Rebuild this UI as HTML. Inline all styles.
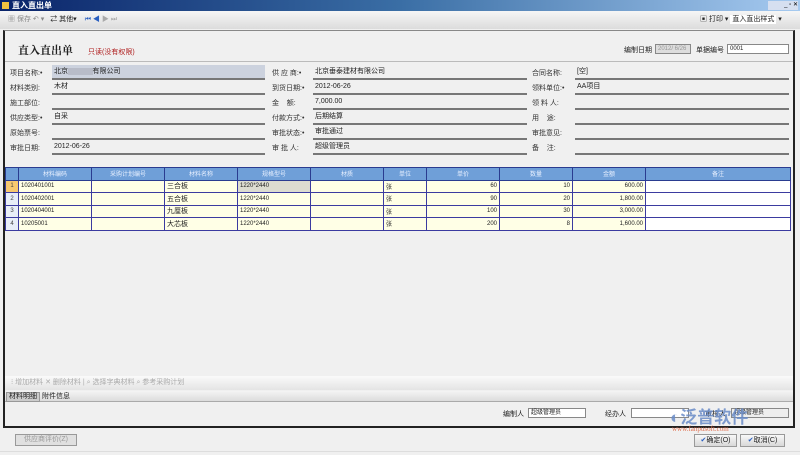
<!DOCTYPE html>
<html><head><meta charset="utf-8"><style>
*{margin:0;padding:0;box-sizing:border-box}
body{width:800px;height:455px;background:#f0f0f0;font-family:"Liberation Sans","Noto Sans CJK SC",sans-serif;font-size:7px;color:#222;position:relative;overflow:hidden}
.a{position:absolute}
.title{left:0;top:0;width:800px;height:11px;background:linear-gradient(90deg,#0a246a,#3a6ea5 50%,#a6caf0);color:#fff;font-weight:bold;font-size:8px;line-height:11px;padding-left:12px}
.tb{left:0;top:11px;width:800px;height:18px;background:linear-gradient(#f6f6f6,#dcdcdc);color:#888;line-height:18px}
.panel{left:3px;top:30px;width:792px;height:398px;border:2px solid #222;border-top:1px solid #888;background:#f0f0f0}
.lbl{color:#333;line-height:15px}
.val{border-bottom:2px solid #777;height:15px;line-height:14px;padding-left:2px}
table{border-collapse:collapse;position:absolute;left:5px;top:167px;font-size:6px}
td,th{border:1px solid #3b3ba0;height:12.5px;padding:0 2px;white-space:nowrap}
th{background:#6f9fd8;color:#e8f0ff;font-weight:normal;border-color:#2a3c90}
td{background:#ffffe6}
td.r{text-align:right}
td.w{background:#fff}
td.n{background:#e8eef8;text-align:center;color:#444}
.btn{border:1px solid #999;background:linear-gradient(#f8f8f8,#d8d8d8);text-align:center}
.inp{background:#fff;border:1px solid #888;height:10px;line-height:9px;padding-left:2px;font-size:6px}
</style></head><body>
<div class="a title">直入直出单</div>
<div class="a" style="left:2px;top:2px;width:7px;height:7px;background:#f0c040"></div>
<div class="a" style="left:768px;top:1px;width:30px;height:9px;background:#d6dff0;font-size:6px;color:#000;text-align:right">_ ▫ ✕</div>
<div class="a tb"><span style="margin-left:8px">▦ 保存 ↶ ▾</span><span style="color:#222;margin-left:6px">⇄ 其他▾</span><span style="color:#2a5fc0;margin-left:8px">⏮ ◀ </span><span style="color:#aaa">▶ ⏭</span></div>
<div class="a" style="left:700px;top:13px;width:98px;height:14px;line-height:14px;color:#222">▣ 打印 ▾ <span style="background:#fff;padding:1px 2px">直入直出样式</span> ▾</div>
<div class="a panel"></div>
<div class="a" style="left:18px;top:42px;font-size:11px;font-weight:bold;font-family:'Noto Serif CJK SC',serif">直入直出单</div>
<div class="a" style="left:88px;top:47px;color:#b02020">只读(没有权限)</div>
<div class="a" style="left:624px;top:45px">编制日期</div>
<div class="a inp" style="left:655px;top:44px;width:36px;background:#ddd;color:#999">2012/ 6/26</div>
<div class="a" style="left:696px;top:45px">单据编号</div>
<div class="a inp" style="left:727px;top:44px;width:62px">0001</div>
<div class="a" style="left:5px;top:61px;width:788px;height:1px;background:#bbb"></div>

<div class="a lbl" style="left:10px;top:66px">项目名称:•<br>材料类别:<br>施工部位:<br>供应类型:•<br>原始票号:<br>审批日期:</div>
<div class="a lbl" style="left:272px;top:66px">供 应 商:•<br>到货日期:•<br>金&nbsp;&nbsp;&nbsp;&nbsp;额:<br>付款方式:•<br>审批状态:•<br>审 批 人:</div>
<div class="a lbl" style="left:532px;top:66px">合同名称:<br>领料单位:•<br>领 料 人:<br>用&nbsp;&nbsp;&nbsp;&nbsp;途:<br>审批意见:<br>备&nbsp;&nbsp;&nbsp;&nbsp;注:</div>
<div class="a" style="left:52px;top:65px;width:213px">
<div class="val" style="background:#ccd2de">北京<span style="background:#b8bcc8;color:#b8bcc8">xxxxxxx</span>有限公司</div><div class="val">木材</div><div class="val"></div><div class="val">自采</div><div class="val"></div><div class="val">2012-06-26</div></div>
<div class="a" style="left:313px;top:65px;width:214px">
<div class="val">北京垂泰建材有限公司</div><div class="val">2012-06-26</div><div class="val">7,000.00</div><div class="val">后期结算</div><div class="val">审批通过</div><div class="val">超级管理员</div></div>
<div class="a" style="left:575px;top:65px;width:214px">
<div class="val">[空]</div><div class="val">AA项目</div><div class="val"></div><div class="val"></div><div class="val"></div><div class="val"></div></div>

<table>
<tr><th style="width:13px"></th><th style="width:73px">材料编码</th><th style="width:73px">采购计划编号</th><th style="width:73px">材料名称</th><th style="width:73px">规格型号</th><th style="width:73px">材质</th><th style="width:43px">单位</th><th style="width:73px">单价</th><th style="width:73px">数量</th><th style="width:73px">金额</th><th style="width:145px">备注</th></tr>
<tr><td class="n" style="background:#f8c870">1</td><td>1020401001</td><td></td><td style="font-size:7px">三合板</td><td style="background:#dcdcd0">1220*2440</td><td></td><td>张</td><td class="r">60</td><td class="r">10</td><td class="r">600.00</td><td class="w"></td></tr>
<tr><td class="n">2</td><td>1020402001</td><td></td><td style="font-size:7px">五合板</td><td>1220*2440</td><td></td><td>张</td><td class="r">90</td><td class="r">20</td><td class="r">1,800.00</td><td class="w"></td></tr>
<tr><td class="n">3</td><td>1020404001</td><td></td><td style="font-size:7px">九厘板</td><td>1220*2440</td><td></td><td>张</td><td class="r">100</td><td class="r">30</td><td class="r">3,000.00</td><td class="w"></td></tr>
<tr><td class="n">4</td><td>10205001</td><td></td><td style="font-size:7px">大芯板</td><td>1220*2440</td><td></td><td>张</td><td class="r">200</td><td class="r">8</td><td class="r">1,600.00</td><td class="w"></td></tr>
</table>
<div class="a" style="left:5px;top:376px;width:788px;height:14px;background:linear-gradient(#fafafa,#e4e4e4);color:#aaa;line-height:14px;padding-left:6px">⁝ 增加材料 ✕ 删除材料 | ⌕ 选择字典材料 ⌕ 参考采购计划</div>
<div class="a" style="left:5px;top:391px;width:788px;height:11px;background:linear-gradient(#f4f4f4,#dcdcdc);border-bottom:1px solid #aaa"></div>
<div class="a" style="left:6px;top:392px;width:34px;height:10px;background:#ccc;border:1px solid #999;line-height:8px;text-align:center">材料明细</div>
<div class="a" style="left:42px;top:393px;line-height:8px">附件信息</div>
<div class="a" style="left:503px;top:409px">编制人</div>
<div class="a inp" style="left:528px;top:408px;width:58px">超级管理员</div>
<div class="a" style="left:605px;top:409px">经办人</div>
<div class="a inp" style="left:631px;top:408px;width:58px"></div>
<div class="a" style="left:705px;top:409px">审核人</div>
<div class="a inp" style="left:731px;top:408px;width:58px;background:#eee">超级管理员</div>
<div class="a" style="left:670px;top:403px;font-size:17px;color:#6a8cc8;opacity:.85;font-weight:bold">◐泛普软件</div>
<div class="a" style="left:672px;top:425px;font-size:7px;color:#e07050;font-family:'Liberation Serif',serif">www.fanpusoft.com</div>
<div class="a btn" style="left:15px;top:434px;width:62px;height:12px;color:#999;line-height:10px;background:#e0e0e0">供应商评价(Z)</div>
<div class="a btn" style="left:694px;top:434px;width:43px;height:13px;line-height:11px"><span style="color:#2a5fc0">✔</span>确定(O)</div>
<div class="a btn" style="left:740px;top:434px;width:45px;height:13px;line-height:11px"><span style="color:#2a5fc0">✔</span>取消(C)</div>
<div class="a" style="left:0;top:451px;width:800px;height:1px;background:#ddd"></div>
</body></html>
